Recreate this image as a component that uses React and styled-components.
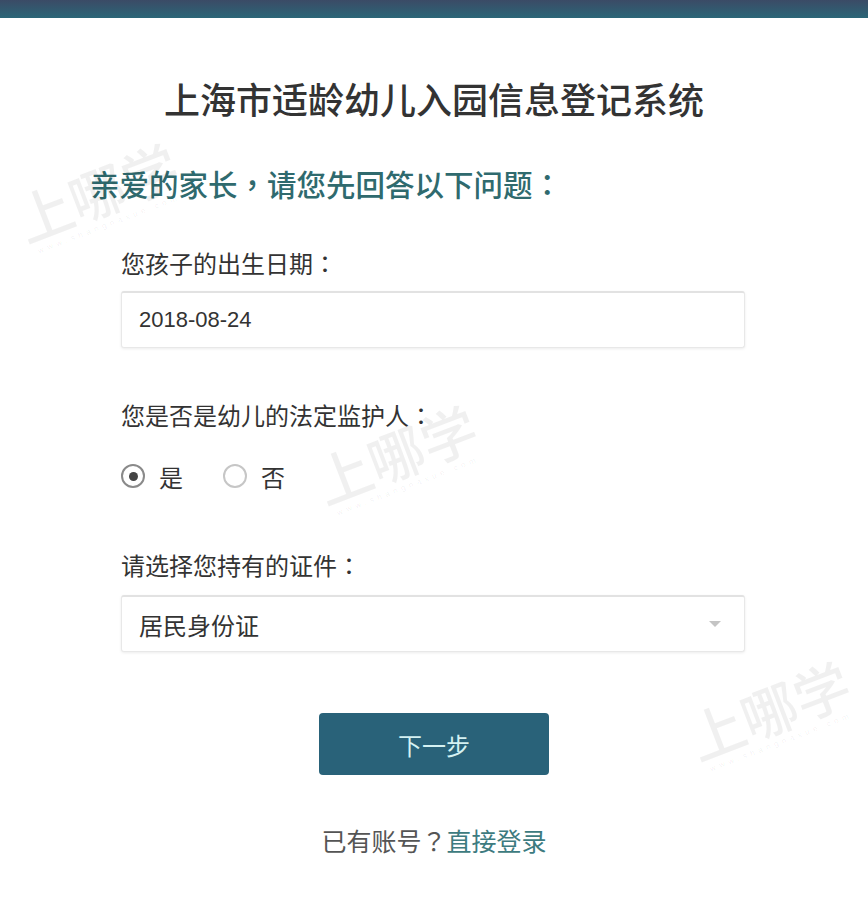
import React from 'react';
import styled, { createGlobalStyle } from 'styled-components';

const GlobalStyle = createGlobalStyle`
  body {
    margin: 0;
    background: #fff;
    font-family: "Noto Sans CJK SC", "Liberation Sans", sans-serif;
    color: #333;
    text-spacing-trim: space-all;
  }
`;

const Page = styled.div`
  position: relative;
  width: 868px;
  min-height: 920px;
  overflow: hidden;
  background: #fff;
`;

const TopBar = styled.div`
  height: 18px;
  background: linear-gradient(#3b4b66, #2b6677);
`;

// full-width punctuation drawn centred, as in the original page
const Punct = styled.span`
  font-family: "Noto Sans CJK TC", "Noto Sans CJK SC", sans-serif;
`;

const Title = styled.h1`
  margin: 58px 0 0;
  font-size: 36px;
  line-height: 44px;
  font-weight: 500;
  text-align: center;
  color: #333;
`;

const Intro = styled.h2`
  margin: 43px 0 0 90px;
  font-size: 29.5px;
  line-height: 40px;
  font-weight: 500;
  color: #2f6a6e;
`;

const Form = styled.form`
  margin: 0 123px 0 121px;
  display: flex;
  flex-direction: column;
`;

const Label = styled.div`
  margin-top: ${(p) => p.$gap}px;
  font-size: 24px;
  line-height: 34px;
  color: #333;
`;

const Field = styled.div`
  margin-top: ${(p) => p.$gap}px;
  height: 57px;
  box-sizing: border-box;
  display: flex;
  align-items: center;
  padding: 0 17px;
  border: 1px solid #e8e8e8;
  border-top: 2px solid #e2e2e2;
  border-radius: 3px;
  box-shadow: 0 1px 3px rgba(0, 0, 0, 0.08);
  background: #fff;
`;

const DateText = styled.span`
  font-family: "Liberation Sans", Arial, sans-serif;
  font-size: 22px;
  color: #333;
`;

const SelectText = styled.span`
  flex: 1;
  font-size: 24px;
  color: #333;
`;

const Caret = styled.span`
  width: 0;
  height: 0;
  margin-right: 6px;
  border-left: 6px solid transparent;
  border-right: 6px solid transparent;
  border-top: 6px solid #c4c4c4;
`;

const RadioRow = styled.div`
  margin-top: 29px;
  height: 30px;
  display: flex;
  align-items: center;
`;

const RadioOption = styled.label`
  display: flex;
  align-items: center;
  gap: 14px;
  margin-right: 40px;
  font-size: 24px;
  color: #333;
`;

const RadioDot = styled.span`
  width: 24px;
  height: 24px;
  box-sizing: border-box;
  border-radius: 50%;
  border: 2px solid ${(p) => (p.$checked ? '#8a8a8a' : '#c6c6c6')};
  display: flex;
  align-items: center;
  justify-content: center;

  &::after {
    content: '';
    width: 9px;
    height: 9px;
    border-radius: 50%;
    background: ${(p) => (p.$checked ? '#444' : 'transparent')};
  }
`;

const Button = styled.button`
  display: block;
  margin: 61px auto 0;
  width: 230px;
  height: 62px;
  border: none;
  border-radius: 4px;
  background: #296279;
  color: #d4f1f2;
  font-family: inherit;
  font-size: 24px;
  cursor: pointer;
`;

const Footer = styled.p`
  margin: 48px 0 0;
  text-align: center;
  font-size: 25px;
  line-height: 34px;
  color: #555;
`;

const LoginLink = styled.a`
  color: #3d7b80;
  text-decoration: none;
`;

// faint diagonal site watermark laid over the form
const Watermark = styled.div`
  position: absolute;
  left: ${(p) => p.$x}px;
  top: ${(p) => p.$y}px;
  width: 0;
  height: 0;
  pointer-events: none;
`;

const MarkInner = styled.div`
  width: 170px;
  transform: translate(-50%, -40%) rotate(-21deg);
  color: rgba(0, 0, 0, 0.06);
  text-align: center;
`;

const MarkBig = styled.div`
  font-size: 56px;
  line-height: 62px;
  font-weight: 500;
`;

const MarkSmall = styled.div`
  font-family: "Liberation Sans", sans-serif;
  font-size: 8px;
  letter-spacing: 4px;
  white-space: nowrap;
`;

const marks = [
  { x: 98, y: 188 },
  { x: 397, y: 450 },
  { x: 770, y: 706 },
];

export default function App() {
  return (
    <Page>
      <GlobalStyle />
      <TopBar />
      <Title>上海市适龄幼儿入园信息登记系统</Title>
      <Intro>
        亲爱的家长<Punct>，</Punct>请您先回答以下问题<Punct>：</Punct>
      </Intro>
      <Form>
        <Label $gap={43}>
          您孩子的出生日期<Punct>：</Punct>
        </Label>
        <Field $gap={11}>
          <DateText>2018-08-24</DateText>
        </Field>

        <Label $gap={50}>
          您是否是幼儿的法定监护人<Punct>：</Punct>
        </Label>
        <RadioRow>
          <RadioOption>
            <RadioDot $checked />是
          </RadioOption>
          <RadioOption>
            <RadioDot />否
          </RadioOption>
        </RadioRow>

        <Label $gap={57}>
          请选择您持有的证件<Punct>：</Punct>
        </Label>
        <Field $gap={13}>
          <SelectText>居民身份证</SelectText>
          <Caret />
        </Field>
      </Form>
      <Button type="button">下一步</Button>
      <Footer>
        已有账号<Punct>？</Punct>
        <LoginLink href="#">直接登录</LoginLink>
      </Footer>

      {marks.map((m, i) => (
        <Watermark key={i} $x={m.x} $y={m.y}>
          <MarkInner>
            <MarkBig>上哪学</MarkBig>
            <MarkSmall>www.shangnaxue.com</MarkSmall>
          </MarkInner>
        </Watermark>
      ))}
    </Page>
  );
}
